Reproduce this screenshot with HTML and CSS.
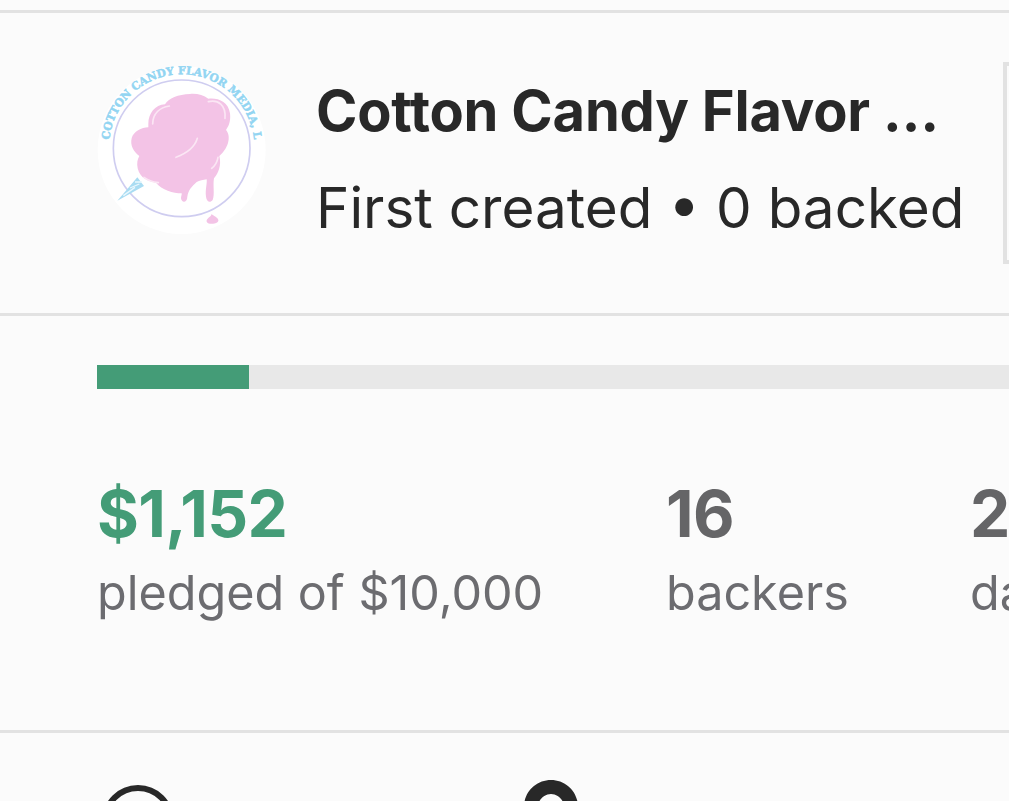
FILE: index.html
```html
<!DOCTYPE html>
<html lang="en">
<head>
<meta charset="utf-8">
<title>Cotton Candy Flavor Media, LLC</title>
<link rel="stylesheet" href="styles.css">
</head>
<body>
<main class="page">
  <header class="creator">
    <svg class="logo" viewBox="36 30 540 540" aria-label="Cotton Candy Flavor Media logo">
      <defs>
        <path id="arc" d="M88 270 A218 218 0 0 1 522 270"/>
      </defs>
      <circle cx="305" cy="300" r="252" fill="#ffffff"/>
      <circle cx="305" cy="295" r="205" fill="none" stroke="#cfcdf0" stroke-width="5"/>
      <text class="logo-text"><textPath href="#arc" textLength="690" lengthAdjust="spacingAndGlyphs">COTTON CANDY FLAVOR MEDIA, LLC</textPath></text>
      <path d="M112 452 L172 382 L192 408 Z" fill="#a9dcf2"/>
      <path d="M130 437 L165 412 M150 414 L178 402 M165 396 L186 396" stroke="#e9f7fd" stroke-width="4" fill="none"/>
      <path class="cloud" d="M205 222 C205 190 225 165 255 163 C265 145 295 133 330 132 C350 130 370 135 385 146 C415 143 445 155 450 190 C453 215 445 230 438 240 C452 255 450 290 418 318 C425 345 415 370 402 385 C398 405 405 435 398 450 C390 460 380 455 378 440 C375 420 382 400 380 388 C370 390 358 392 350 396 C335 410 325 420 322 440 C322 458 305 460 303 445 C303 438 306 434 305 430 C280 430 245 420 228 398 C205 395 180 385 173 355 C170 340 172 328 178 318 C160 305 150 285 155 265 C160 245 185 232 205 232 Z"/>
      <path d="M218 222 C218 190 240 172 268 168 M385 155 C415 148 438 165 435 205 M288 322 C320 310 345 290 352 265 M395 355 C408 345 412 335 414 322 M192 382 C205 392 220 396 235 398" fill="none" stroke="#fbe6f4" stroke-width="5" stroke-linecap="round"/>
      <path class="cloud" d="M395 492 C400 498 412 500 415 510 C418 522 385 526 380 515 C378 505 392 502 395 492 Z"/>
    </svg>
    <div class="creator-info">
      <h1 class="creator-name">Cotton Candy Flavor Media, LLC</h1>
      <p class="creator-meta">First created • 0 backed</p>
    </div>
    <div class="side-box"></div>
  </header>

  <section class="funding">
    <div class="progress"><div class="progress-fill"></div></div>
    <div class="stats">
      <div class="stat stat-pledged">
        <div class="stat-value stat-green">$1,152</div>
        <div class="stat-label">pledged of $10,000</div>
      </div>
      <div class="stat stat-backers">
        <div class="stat-value">16</div>
        <div class="stat-label">backers</div>
      </div>
      <div class="stat stat-days">
        <div class="stat-value">2</div>
        <div class="stat-label">days to go</div>
      </div>
    </div>
  </section>

  <section class="details">
    <svg class="icon-clock" viewBox="0 0 72 72"><circle cx="36" cy="36" r="33" fill="none" stroke="#282828" stroke-width="6"/></svg>
    <svg class="icon-pin" viewBox="0 0 54 70"><path fill-rule="evenodd" fill="#282828" d="M27 0 C12 0 0 12 0 27 C0 45 20 62 27 70 C34 62 54 45 54 27 C54 12 42 0 27 0 Z M27 14 C34 14 40 20 40 27 C40 34 34 40 27 40 C20 40 14 34 14 27 C14 20 20 14 27 14 Z"/></svg>
  </section>
</main>
</body>
</html>
```

FILE: styles.css
```css
* { box-sizing: border-box; }

html, body {
  margin: 0;
  height: 100%;
  overflow: hidden;
  background: #fbfbfb;
}

body {
  font-family: Inter, "Liberation Sans", sans-serif;
  color: #282828;
}

.page {
  width: 1009px;
  height: 801px;
  padding-top: 10px;
  overflow: hidden;
}

.creator {
  height: 306px;
  display: flex;
  align-items: center;
  padding-left: 92px;
  border-top: 3px solid #e2e2e2;
  border-bottom: 3px solid #e2e2e2;
  overflow: hidden;
}

.logo {
  width: 180px;
  height: 180px;
  flex: none;
  align-self: flex-start;
  margin: 47px 44px 0 0;
}

.logo-text {
  font-family: "DejaVu Serif", serif;
  font-weight: 700;
  font-size: 33px;
  fill: #92d5f2;
  stroke: #92d5f2;
  stroke-width: 1.5px;
}

.cloud { fill: #f3c3e6; }

.creator-info {
  width: 687px;
  flex: none;
  margin-top: -7px;
}

.creator-name {
  margin: 0 0 30px;
  width: 636px;
  font-size: 56px;
  line-height: 66px;
  font-weight: 700;
  letter-spacing: -0.2px;
  white-space: nowrap;
  overflow: hidden;
  text-overflow: ellipsis;
}

.creator-meta {
  margin: 0;
  font-size: 56.6px;
  line-height: 68px;
  font-weight: 400;
  white-space: nowrap;
}

.side-box {
  width: 100px;
  height: 202px;
  flex: none;
  border: 4px solid #e2e2e2;
}

.funding {
  height: 417px;
  padding: 49px 0 0 97px;
  border-bottom: 3px solid #e2e2e2;
}

.progress {
  height: 24px;
  background: #e8e8e8;
}

.progress-fill {
  width: 152px;
  height: 100%;
  background: #449c77;
}

.stats {
  display: flex;
  padding-top: 87px;
  white-space: nowrap;
}

.stat { flex: none; }
.stat-pledged { width: 569px; }
.stat-backers { width: 304px; }

.stat-value {
  font-size: 64px;
  line-height: 76px;
  font-weight: 700;
  letter-spacing: -0.6px;
  color: #656567;
}

.stat-green { color: #449c77; }

.stat-label {
  margin-top: 12px;
  font-size: 48.5px;
  line-height: 58px;
  color: #6c6c70;
}

.details {
  display: flex;
  align-items: flex-start;
  padding: 52px 0 0 102px;
}

.icon-clock {
  width: 72px;
  height: 72px;
  flex: none;
}

.icon-pin {
  width: 54px;
  height: 70px;
  flex: none;
  margin: -5px 0 0 350px;
}
```
